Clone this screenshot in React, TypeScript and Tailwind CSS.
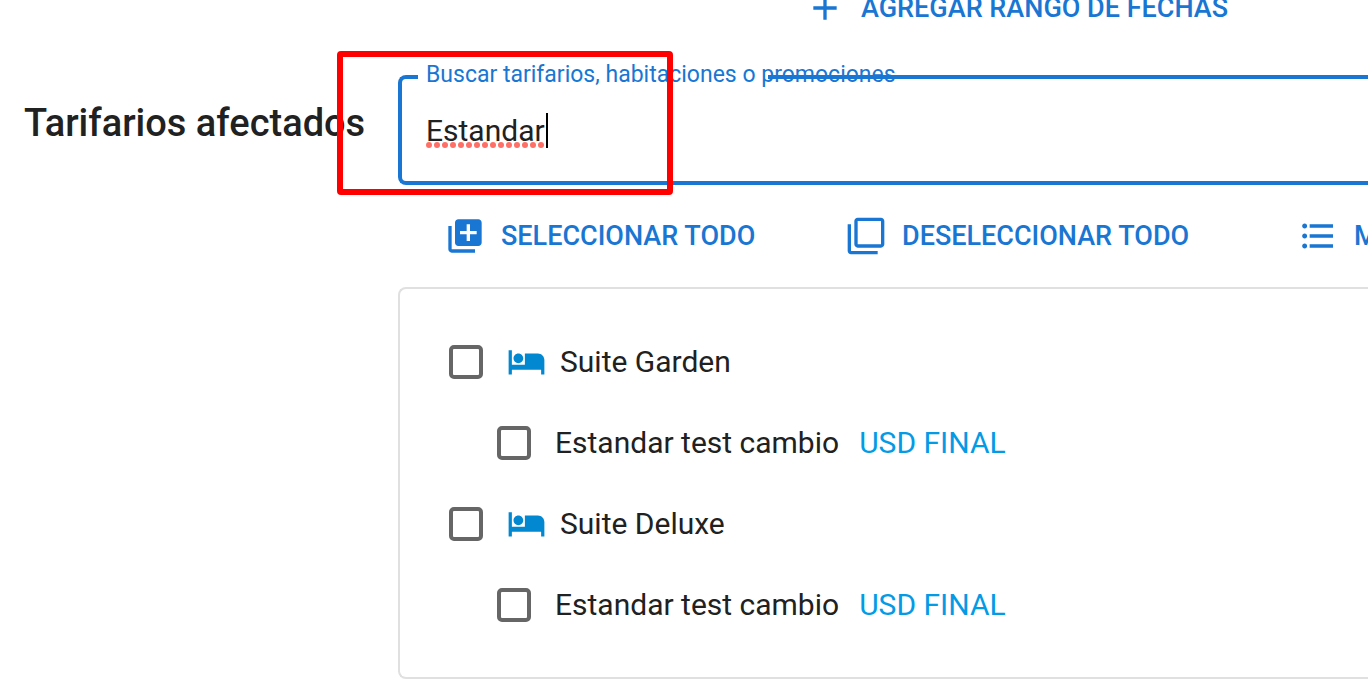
import type { ReactNode } from "react";
import {
  MdAdd,
  MdFilterNone,
  MdFormatListBulleted,
  MdHotel,
  MdLibraryAdd,
} from "react-icons/md";

interface ActionProps {
  icon: ReactNode;
  label: string;
}

interface Room {
  id: string;
  name: string;
  rate: string;
  currency: string;
}

const rooms: Room[] = [
  { id: "garden", name: "Suite Garden", rate: "Estandar test cambio", currency: "USD FINAL" },
  { id: "deluxe", name: "Suite Deluxe", rate: "Estandar test cambio", currency: "USD FINAL" },
];

function Action({ icon, label }: ActionProps) {
  return (
    <button
      type="button"
      className="flex items-center gap-4 text-[27px] leading-10 font-medium uppercase whitespace-nowrap text-[#1976d2]"
    >
      {icon}
      {label}
    </button>
  );
}

function Checkbox({ id }: { id: string }) {
  return (
    <input
      id={id}
      type="checkbox"
      className="size-[34px] shrink-0 appearance-none rounded-[5px] border-4 border-[#666] checked:bg-[#1976d2]"
    />
  );
}

function SearchField() {
  return (
    <div className="relative h-[110px]">
      <fieldset
        aria-hidden="true"
        className="pointer-events-none absolute inset-0 rounded-l-lg border-4 border-r-0 border-[#1976d2] pl-4"
      >
        <legend className="h-0 w-[350px]" />
      </fieldset>
      <label
        htmlFor="search"
        className="absolute -top-4 left-7 text-[23px] leading-8 whitespace-nowrap text-[#1976d2]"
      >
        Buscar tarifarios, habitaciones o promociones
      </label>
      <input
        id="search"
        type="text"
        defaultValue="Estandar"
        spellCheck={false}
        className="h-full w-full bg-transparent px-7 text-[30px] outline-none"
      />
      {/* spelling underline and caret */}
      <svg width="120" height="6" className="absolute top-[67px] left-7" aria-hidden="true">
        <line
          x1="3"
          y1="3"
          x2="116"
          y2="3"
          stroke="#ff6f66"
          strokeWidth="6"
          strokeLinecap="round"
          strokeDasharray="0 8"
        />
      </svg>
      <span className="absolute top-[38px] left-[148px] h-[35px] w-0.5 bg-black" />
      {/* highlight */}
      <div className="pointer-events-none absolute -top-6 -left-[61px] h-36 w-[336px] rounded-sm border-6 border-[#ff0000]" />
    </div>
  );
}

function RoomItem({ id, name, rate, currency }: Room) {
  return (
    <li>
      <div className="flex h-[81px] items-center">
        <Checkbox id={id} />
        <label htmlFor={id} className="flex items-center gap-3.5 pl-6">
          <MdHotel size={39} className="text-[#0288d1]" />
          {name}
        </label>
      </div>
      <div className="flex h-[81px] items-center pl-12">
        <Checkbox id={`${id}-rate`} />
        <label htmlFor={`${id}-rate`} className="flex gap-5 pl-6">
          {rate}
          <span className="text-[#039be5]">{currency}</span>
        </label>
      </div>
    </li>
  );
}

function App() {
  return (
    <main className="overflow-hidden bg-white pb-2 font-[Roboto,sans-serif] text-[30px] text-[#212121]">
      <div className="-mt-3 pl-[805px]">
        <Action icon={<MdAdd size={40} />} label="Agregar rango de fechas" />
      </div>
      <section className="flex pt-[47px]">
        <h2 className="w-[398px] shrink-0 pt-[23px] pl-6 text-[38px] leading-[50px] font-medium whitespace-nowrap">
          Tarifarios afectados
        </h2>
        <div className="min-w-0 flex-1">
          <SearchField />
          <div className="grid grid-cols-[401px_452px_1fr] py-[31px] pl-[47px]">
            <Action icon={<MdLibraryAdd size={40} />} label="Seleccionar todo" />
            <Action icon={<MdFilterNone size={40} />} label="Deseleccionar todo" />
            <Action icon={<MdFormatListBulleted size={40} />} label="M" />
          </div>
          <ul className="rounded-l-lg border-2 border-r-0 border-[#e0e0e0] py-8 pl-[49px]">
            {rooms.map((room) => (
              <RoomItem key={room.id} {...room} />
            ))}
          </ul>
        </div>
      </section>
    </main>
  );
}

export default App;
